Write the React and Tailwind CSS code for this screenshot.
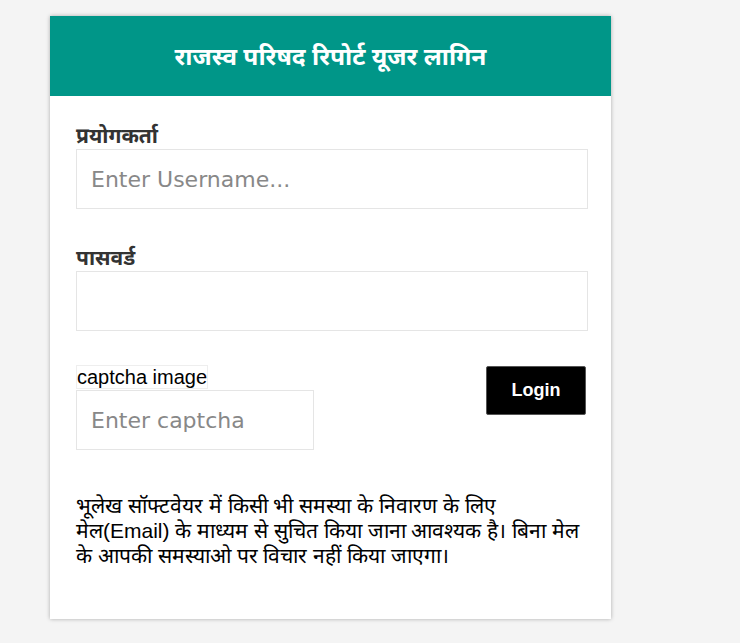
import React from "react";

export default function App() {
  return (
    <div className="min-h-[643px] bg-[#f4f4f4] pt-4 pl-[50px]">
      <div className="w-[561px] bg-white shadow-[0_0_4px_rgba(0,0,0,0.3)]">
        <div className="flex h-20 items-center justify-center bg-[#009688]">
          <h1 className="text-[24.5px] font-bold text-white">राजस्व परिषद रिपोर्ट यूजर लागिन</h1>
        </div>
        <div className="pl-[26px] pr-[23px] pt-[25px] pb-[51px]">
          <label className="block text-[21px] leading-[28px] font-bold text-[#333]">प्रयोगकर्ता</label>
          <input
            type="text"
            placeholder="Enter Username..."
            className="block h-[60px] w-full border border-[#e5e5e5] px-[14px] font-['DejaVu_Sans',sans-serif] text-[22px] placeholder:text-[#888] outline-none"
          />
          <label className="mt-[34px] block text-[21px] leading-[28px] font-bold text-[#333]">पासवर्ड</label>
          <input
            type="password"
            className="block h-[60px] w-full border border-[#e5e5e5] px-[14px] text-[22px] outline-none"
          />
          <div className="mt-[34px] flex items-start justify-between">
            <div>
              <div className="inline-block border border-[#eee] font-['Liberation_Sans',sans-serif] text-[20px] leading-[22px] text-black">
                captcha image
              </div>
              <input
                type="text"
                placeholder="Enter captcha"
                className="block h-[60px] w-[238px] border border-[#e5e5e5] px-[14px] font-['DejaVu_Sans',sans-serif] text-[22px] placeholder:text-[#888] outline-none"
              />
            </div>
            <button className="mt-px mr-[2px] h-[49px] w-[100px] rounded-[2px] border border-[#555] bg-black font-['Liberation_Sans',sans-serif] text-[18px] font-bold text-white">
              Login
            </button>
          </div>
          <p className="mt-[43px] whitespace-nowrap font-['Liberation_Sans',sans-serif] text-[21px] leading-[25px] text-black">
            भूलेख सॉफ्टवेयर में किसी भी समस्या के निवारण के लिए
            <br />
            मेल(Email) के माध्यम से सुचित किया जाना आवश्यक है। बिना मेल
            <br />
            के आपकी समस्याओ पर विचार नहीं किया जाएगा।
          </p>
        </div>
      </div>
    </div>
  );
}
